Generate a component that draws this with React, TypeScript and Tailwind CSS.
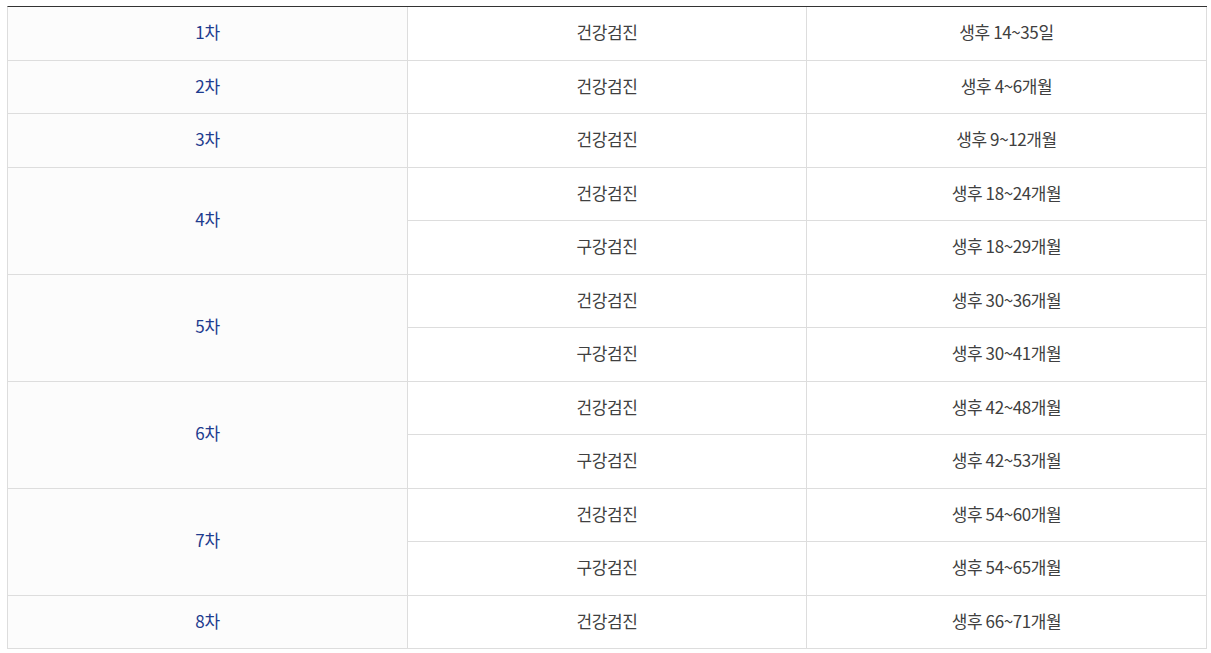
import React from "react";

type Row = { cha: string; items: { type: string; age: string }[] };

const data: Row[] = [
  { cha: "1차", items: [{ type: "건강검진", age: "생후 14~35일" }] },
  { cha: "2차", items: [{ type: "건강검진", age: "생후 4~6개월" }] },
  { cha: "3차", items: [{ type: "건강검진", age: "생후 9~12개월" }] },
  {
    cha: "4차",
    items: [
      { type: "건강검진", age: "생후 18~24개월" },
      { type: "구강검진", age: "생후 18~29개월" },
    ],
  },
  {
    cha: "5차",
    items: [
      { type: "건강검진", age: "생후 30~36개월" },
      { type: "구강검진", age: "생후 30~41개월" },
    ],
  },
  {
    cha: "6차",
    items: [
      { type: "건강검진", age: "생후 42~48개월" },
      { type: "구강검진", age: "생후 42~53개월" },
    ],
  },
  {
    cha: "7차",
    items: [
      { type: "건강검진", age: "생후 54~60개월" },
      { type: "구강검진", age: "생후 54~65개월" },
    ],
  },
  { cha: "8차", items: [{ type: "건강검진", age: "생후 66~71개월" }] },
];

export default function App() {
  return (
    <div
      className="bg-white pt-[6px] pl-[7px] w-[1211px] h-[653px]"
      style={{ fontFamily: '"Noto Sans CJK KR", "Noto Sans", sans-serif' }}
    >
      <div className="w-[1200px] border-t border-t-[#333333] border-l border-l-[#dddddd]">
        {data.map((r) => (
          <div key={r.cha} className="flex">
            <div className="w-[400px] shrink-0 flex items-center justify-center pb-[3px] bg-[#fcfcfc] border-r border-b border-[#dddddd] text-[17px] text-[#1f3c8f] tracking-[-0.4px]">
              {r.cha}
            </div>
            <div className="flex-1 flex flex-col">
              {r.items.map((it, i) => (
                <div key={i} className="flex h-[53.5px]">
                  <div className="w-[399px] shrink-0 flex items-center justify-center pb-[3px] border-r border-b border-[#dddddd] text-[17px] text-[#404040] tracking-[-0.4px]">
                    {it.type}
                  </div>
                  <div className="flex-1 flex items-center justify-center pb-[3px] border-r border-b border-[#dddddd] text-[17px] text-[#404040] tracking-[-0.4px]">
                    {it.age}
                  </div>
                </div>
              ))}
            </div>
          </div>
        ))}
      </div>
    </div>
  );
}
